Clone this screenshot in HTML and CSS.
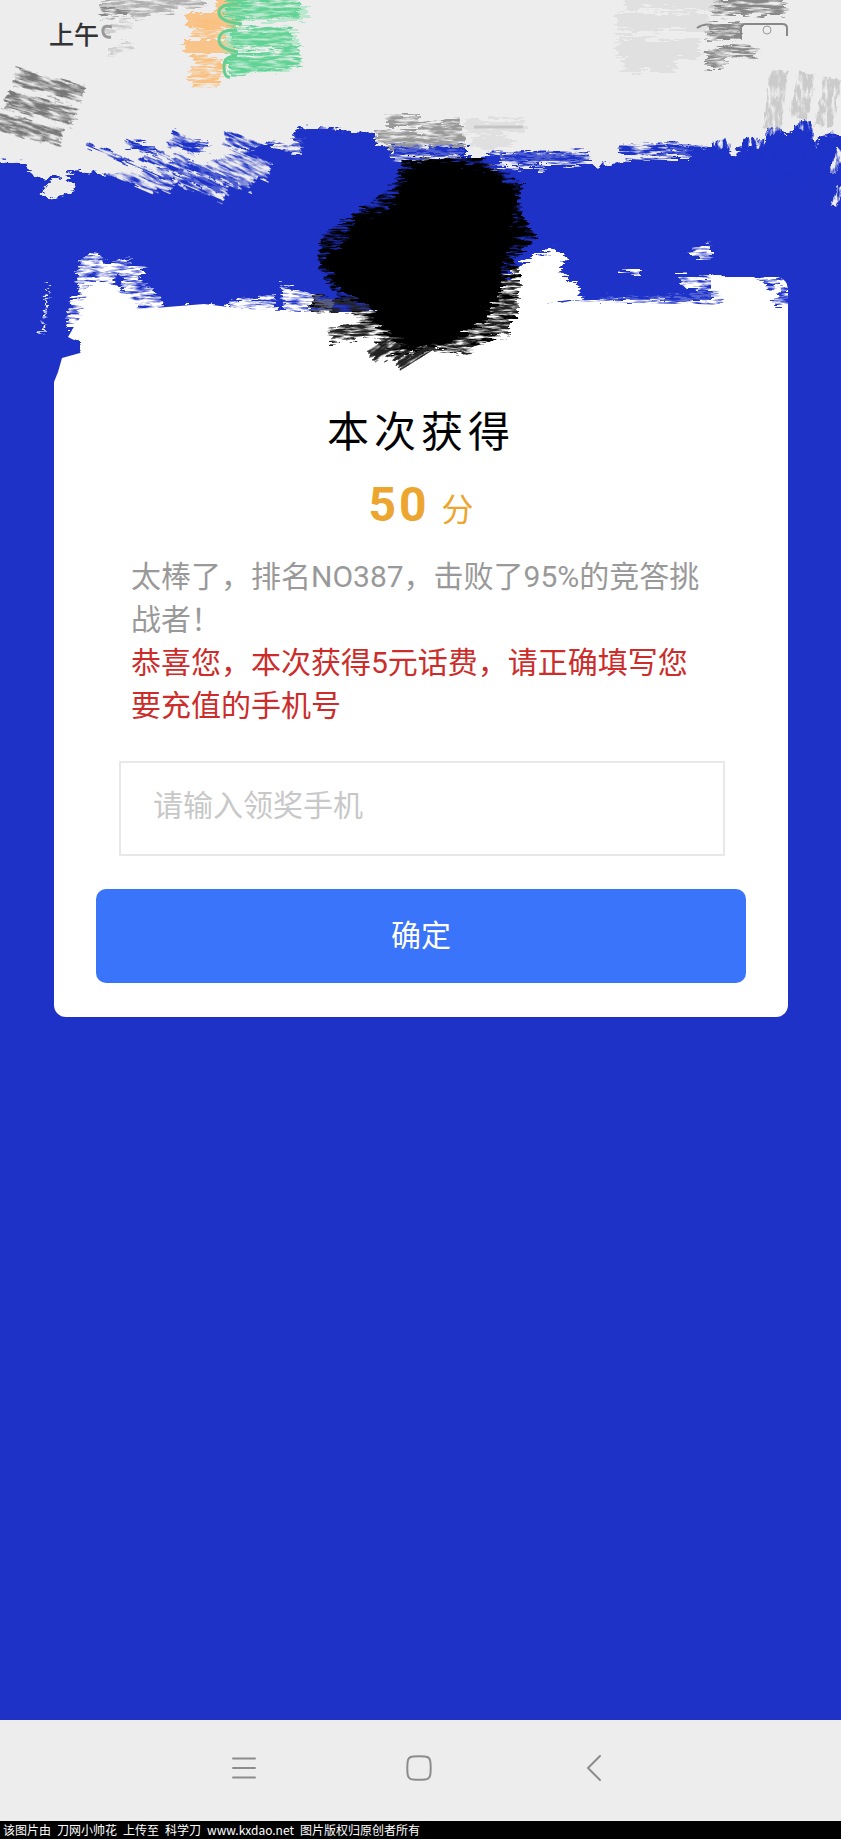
FILE: index.html
```html
<!DOCTYPE html>
<html lang="zh-CN">
<head>
<meta charset="utf-8">
<meta name="viewport" content="width=device-width, initial-scale=1">
<title>本次获得</title>
<link rel="stylesheet" href="styles.css">
</head>
<body>
<header class="status"><span class="clock">上午</span></header>
<main class="page">
  <form class="card">
    <h1 class="title">本次获得</h1>
    <p class="score"><strong class="score-value">50</strong><span class="score-unit">分</span></p>
    <p class="message">太棒了，排名NO387，击败了95%的竞答挑战者！<span class="prize">恭喜您，本次获得5元话费，请正确填写您要充值的手机号</span></p>
    <input class="phone" type="tel" aria-label="请输入领奖手机" placeholder="请输入领奖手机">
    <button class="submit" type="button">确定</button>
  </form>
</main>
<nav class="navbar">
  <button class="nav-button" type="button" aria-label="菜单">
    <svg class="nav-icon" viewBox="0 0 28 28"><path d="M3 4.500H25M3 14H25M3 23.500H25"/></svg>
  </button>
  <button class="nav-button" type="button" aria-label="主页">
    <svg class="nav-icon" viewBox="0 0 28 28"><path d="M8 2.500Q14 2 20 2.500Q25 2.800 25.400 8Q26 14 25.400 20Q25 25 20 25.500Q14 26 8 25.500Q3 25 2.600 20Q2 14 2.600 8Q3 2.800 8 2.500Z"/></svg>
  </button>
  <button class="nav-button" type="button" aria-label="返回">
    <svg class="nav-icon" viewBox="0 0 28 28"><path d="M20 2L8 14L20 26"/></svg>
  </button>
</nav>
<footer class="credit">该图片由&ensp;刀网小帅花&ensp;上传至&ensp;科学刀&ensp;www.kxdao.net&ensp;图片版权归原创者所有</footer>

<svg class="paint" viewBox="0 0 841 400" aria-hidden="true">
  <defs>
    <filter id="edge" x="-5%" y="-10%" width="110%" height="120%">
      <feTurbulence type="fractalNoise" baseFrequency="0.12 0.3" numOctaves="3" seed="3"/>
      <feDisplacementMap in="SourceGraphic" scale="12" xChannelSelector="R" yChannelSelector="G"/>
    </filter>
    <filter id="rough" x="-10%" y="-10%" width="120%" height="120%">
      <feTurbulence type="fractalNoise" baseFrequency="0.05 0.3" numOctaves="4" seed="4"/>
      <feDisplacementMap in="SourceGraphic" scale="22" xChannelSelector="R" yChannelSelector="G"/>
    </filter>
    <filter id="bristle" x="-20%" y="-20%" width="140%" height="140%">
      <feTurbulence type="fractalNoise" baseFrequency="0.06 0.36" numOctaves="4" seed="9" result="n"/>
      <feDisplacementMap in="SourceGraphic" in2="n" scale="14" xChannelSelector="R" yChannelSelector="G" result="d"/>
      <feColorMatrix in="n" type="matrix" values="0 0 0 0 0  0 0 0 0 0  0 0 0 0 0  0 0 3 0 -0.800" result="m"/>
      <feComposite in="d" in2="m" operator="in"/>
    </filter>
    <filter id="upright" x="-20%" y="-20%" width="140%" height="140%">
      <feTurbulence type="fractalNoise" baseFrequency="0.25 0.08" numOctaves="4" seed="7" result="n"/>
      <feDisplacementMap in="SourceGraphic" in2="n" scale="7" xChannelSelector="R" yChannelSelector="G" result="d"/>
      <feColorMatrix in="n" type="matrix" values="0 0 0 0 0  0 0 0 0 0  0 0 0 0 0  0 0 4 0 -1.100" result="m"/>
      <feComposite in="d" in2="m" operator="in"/>
    </filter>
  </defs>

  <!-- lower edge of the status area -->
  <path fill="#ededed" filter="url(#edge)" d="M-20 100H861V136L841 136L825 135L815 148L810 130L797 128L790 134L768 134L762 148L740 146L732 158L725 148L714 148L700 148L672 150L655 154L628 160L596 167L585 159L555 153L520 152L480 157L466 157V146L420 148L395 148L375 145V133L330 129L296 127L292 147L270 140L255 148L230 154L200 166L160 168L110 174L72 171L62 176L35 178L25 163L-20 160Z"/>
  <path fill="#ededed" d="M0 90H841V118H0Z"/>
  <g fill="none" stroke="#1f32c8" filter="url(#upright)">
    <g stroke-linecap="round">
      <path stroke-width="18" d="M720 148V170M750 146V170M776 136V176M804 129V180M830 141V180"/>
      <path stroke-width="14" d="M763 146V170M790 141V170M817 148V170"/>
    </g>
    <path stroke-width="12" d="M710 164H841"/>
  </g>
  <path stroke="#ededed" fill="none" stroke-width="6" filter="url(#upright)" d="M841 150L832 174M841 188L834 206"/>
  <g transform="rotate(23 150 165)">
    <g fill="none" stroke="#ededed" filter="url(#bristle)">
      <path stroke-width="22" d="M75 180H165M88 160H222M128 143H240M170 126H262"/>
      <path stroke-width="12" d="M150 178H180M200 165H232M225 143H252"/>
    </g>
    <g fill="none" stroke="#1f32c8" filter="url(#bristle)">
      <path stroke-width="4" d="M84 171H170M118 152H215"/>
      <path stroke-width="6" d="M138 160H225M170 148H240"/>
      <path stroke-width="13" d="M210 110H260M158 132H186"/>
    </g>
  </g>
  <g fill="none" stroke="#ededed" filter="url(#bristle)">
    <path stroke-width="12" d="M0 157H35"/>
    <path stroke-width="14" d="M270 141L302 146M390 154H462M500 158H600M570 153H690"/>
    <path stroke-width="4" d="M490 168H545"/>
  </g>
  <path fill="#ededed" filter="url(#edge)" d="M46 185L58 178L64 168L68 180L76 187L70 193L46 200L41 192Z"/>
  <g fill="none" stroke="#1f32c8" filter="url(#bristle)">
    <path stroke-width="8" d="M130 144L156 150"/>
    <path stroke-width="16" d="M296 137L374 141"/>
    <path stroke-width="11" d="M182 145L208 148M392 150H464M490 157H590M620 150H708"/>
  </g>

  <!-- grey, orange and green smudges on the status area -->
  <g transform="rotate(15 40 110)">
    <g fill="none" stroke="#777" filter="url(#bristle)">
      <path stroke-width="17" d="M8 84H76M4 108H76M-4 132H68"/>
      <path stroke-width="13" d="M40 84H76M36 108H76"/>
    </g>
  </g>
  <g fill="none" filter="url(#bristle)">
    <path stroke="#888" stroke-width="17" d="M101 11L135 4"/>
    <path stroke="#b0b0b0" stroke-width="12" d="M108 2H205M130 12L175 4"/>
    <path stroke="#ccc" stroke-width="8" d="M106 30L130 22M108 53L132 45"/>
    <path stroke="#888" stroke-width="18" d="M711 6H785M706 31H742"/>
    <path stroke="#888" stroke-width="12" d="M706 57Q735 46 756 54"/>
    <path stroke="#888" stroke-width="10" d="M706 64H726"/>
    <path stroke="#999" stroke-width="12" d="M387 121H420M376 136H464M420 130H460M386 141H465"/>
    <path stroke="#999" stroke-width="8" d="M420 128L460 124"/>
  </g>
  <g fill="none" stroke="#d8d8d8" stroke-width="18" opacity=".6" filter="url(#rough)">
    <path d="M617 22H710M617 48H700M625 0H720M625 63H675"/>
    <path d="M465 126H525M468 142H510" stroke-width="12"/>
  </g>
  <path d="M474 127H523" stroke="#c5c5c5" stroke-width="3"/>
  <path fill="none" stroke="#888" stroke-width="2" d="M697 28Q704 23 712 25M741 39V27Q741 24 745 24H782Q787 24 787 28V36"/>
  <circle cx="767" cy="30" r="4" fill="none" stroke="#999"/>
  <path fill="none" stroke="#999" stroke-width="3" d="M112 27Q102 24 103 32Q104 38 111 37"/>
  <g fill="none" stroke="#fac07f" stroke-width="16" filter="url(#edge)">
    <path d="M187 20H240M184 48H235M216 2H240" opacity=".9"/>
  </g>
  <g fill="none" stroke="#fac07f" stroke-width="19" filter="url(#bristle)">
    <path d="M192 28H224M192 62L224 70M190 78H220"/>
  </g>
  <g fill="none" stroke="#a9e6c4" stroke-width="18" opacity=".75" filter="url(#rough)">
    <path d="M225 12H308M225 40H298M231 66H290"/>
  </g>
  <g fill="none" stroke="#60d394" stroke-width="21" filter="url(#bristle)">
    <path d="M225 8H300M230 37H290M228 66L300 56"/>
  </g>
  <path fill="none" stroke="#64cf91" stroke-width="3" d="M238 4Q218 4 219 13Q220 22 242 24M237 30Q219 29 219 40Q219 49 238 52M237 56Q224 56 224 66Q224 78 230 77"/>
  <g fill="none" stroke="#aaa" stroke-width="18" filter="url(#upright)">
    <path d="M779 70L772 130M807 73L798 118M832 78L824 126" opacity=".5"/>
  </g>

  <!-- upper edge of the card -->
  <path fill="#1f32c8" d="M50 274H711V290L731 294L728 305L640 303L570 301L550 305L400 312L300 312L245 309L204 304L155 308L85 311L75 325L68 337L80 343V353L62 358L58 372L54 382H50Z"/>
  <path fill="#1f32c8" d="M50 270H793V277H50Z"/>
  <g filter="url(#bristle)">
    <path fill="#fff" d="M80 260L96 252L107 263L130 257L124 272L112 279L130 298L163 304L160 318H68L72 298L80 295L75 281Z"/>
    <path fill="#fff" d="M120 262L145 268L138 280L155 290L163 309L125 306ZM230 300L276 295V313H230ZM280 285L335 300L330 314H285Z"/>
    <path fill="#fff" d="M690 250L711 243V257H690ZM675 276H711L735 280L730 312H570V299L690 294ZM620 270H640V275H620Z"/>
    <path fill="#fff" d="M48 284H50L43 335H40ZM68 312H88V328H66Z"/>
  </g>
  <g fill="#fff" filter="url(#rough)">
    <path d="M85 282L108 278L120 292L135 303L145 318H78Z"/>
    <path d="M510 272L545 250L567 252L565 264L560 272L580 288L581 303L550 306L500 340L470 328Z"/>
    <path d="M725 290L741 286H770L770 300L765 312H720Z"/>
  </g>
  <path fill="#fff" filter="url(#edge)" d="M85 313L155 311L204 305L245 309L285 312H730V330L400 350H82L78 330Z"/>
  <g filter="url(#bristle)">
    <path fill="#1f32c8" d="M755 278L785 278L770 290ZM782 285L789 290V306H774ZM582 290H712V300H582ZM60 340H80V352H60Z"/>
  </g>
  <path fill="#1f32c8" d="M780 277H790V290H788Q788 280 780 277Z"/>

  <!-- black scribble over the card's picture -->
  <g filter="url(#bristle)">
    <path fill="#000" d="M320 247L326 232L350 218L370 203L393 185L404 160L480 158L522 184L519 205L536 239L512 260L520 270L516 318L495 337L470 350L430 350L395 360L370 330L350 312L310 310L313 293L340 300L318 267Z"/>
    <path fill="none" stroke="#222" stroke-width="15" d="M314 305H380M330 336L375 328M445 346H472M470 328H508M480 306H518M485 286H518"/>
    <path fill="none" stroke="#222" stroke-width="8" d="M330 336L360 330"/>
  </g>
  <g transform="rotate(-32 390 345)">
    <path fill="none" stroke="#222" stroke-width="20" filter="url(#bristle)" d="M368 343H410M386 367H425"/>
    <path fill="none" stroke="#222" stroke-width="18" filter="url(#bristle)" d="M368 343H410M386 367H425"/>
  </g>
  <path fill="#000" filter="url(#rough)" d="M408 165L430 161L470 162L490 174L513 183L516 200L514 221L526 236L504 255L502 290L488 318L462 337L434 346L410 350L385 333L371 310L336 286L325 258L348 239L351 217L386 211L399 190Z"/>
</svg>
</body>
</html>
```
FILE: styles.css
```css
* {
  box-sizing: border-box;
}

body {
  margin: 0;
  min-height: 100vh;
  display: flex;
  flex-direction: column;
  position: relative;
  background: #1f32c8;
  font-family: Roboto, "Noto Sans CJK SC", sans-serif;
}

.status {
  min-height: 124px;
  padding: 18px 49px;
  background: #ededed;
  color: #333;
  font-size: 25px;
  font-weight: 500;
  line-height: 36px;
}

.page {
  flex: 1;
  padding: 153px 53px 40px 54px;
}

.card {
  display: flex;
  flex-direction: column;
  padding: 126px 42px 34px;
  border-radius: 12px;
  background: #fff;
}

.title {
  margin: 0;
  text-align: center;
  font-size: 42px;
  font-weight: 400;
  line-height: 60px;
  letter-spacing: 5px;
  color: #000;
}

.score {
  margin: 12px 0 0;
  display: flex;
  justify-content: center;
  align-items: baseline;
  gap: 12px;
  line-height: 60px;
  color: #eca52f;
}

.score-value {
  font-size: 48px;
  letter-spacing: 3px;
}

.score-unit {
  font-size: 32px;
}

.message {
  margin: 15px 35px 0;
  font-size: 30px;
  line-height: 43px;
  color: #999;
}

.prize {
  display: block;
  color: #cc2d2b;
}

.phone {
  height: 95px;
  margin: 34px 21px 0 23px;
  padding: 0 32px 6px;
  border: 2px solid #e8e8e8;
  border-radius: 0;
  background: #fff;
  font: inherit;
  font-size: 30px;
}

.phone::placeholder {
  color: #c8c8c8;
  opacity: 1;
}

.submit {
  height: 94px;
  margin-top: 33px;
  padding: 0 0 6px;
  border: 0;
  border-radius: 10px;
  background: #3974fa;
  color: #fff;
  font: inherit;
  font-size: 30px;
}

.navbar {
  height: 101px;
  padding: 0 4px 5px 0;
  display: flex;
  justify-content: center;
  background: #ededed;
}

.nav-button {
  width: 175px;
  padding: 0;
  display: flex;
  align-items: center;
  justify-content: center;
  border: 0;
  background: none;
}

.nav-icon {
  width: 28px;
  height: 28px;
  fill: none;
  stroke: #8c8c8c;
  stroke-width: 2;
  stroke-linecap: round;
  stroke-linejoin: round;
}

.credit {
  padding: 0 3px;
  background: #000;
  color: #fff;
  font-family: "Noto Sans CJK SC", sans-serif;
  font-size: 12px;
  line-height: 18px;
}

.paint {
  position: absolute;
  top: 0;
  left: 0;
  width: 100%;
  pointer-events: none;
}
```
